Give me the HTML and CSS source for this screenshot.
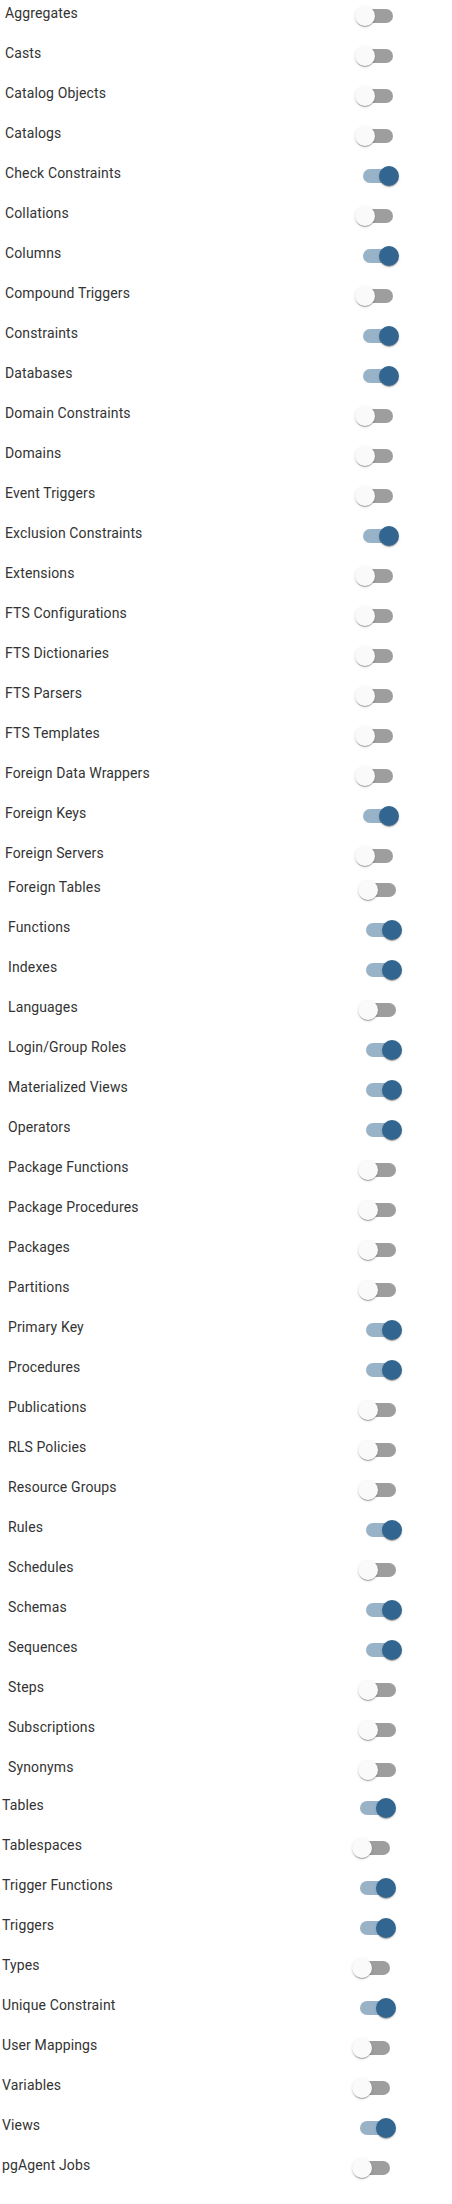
FILE: index.html
```html
<!DOCTYPE html>
<html lang="en">
<head>
<meta charset="utf-8">
<title>Object types</title>
<link rel="stylesheet" href="styles.css">
</head>
<body>
<div class="section s1">
  <div class="row"><span class="label">Aggregates</span><span class="switch"><span class="track"></span><span class="thumb"></span></span></div>
  <div class="row"><span class="label">Casts</span><span class="switch"><span class="track"></span><span class="thumb"></span></span></div>
  <div class="row"><span class="label">Catalog Objects</span><span class="switch"><span class="track"></span><span class="thumb"></span></span></div>
  <div class="row"><span class="label">Catalogs</span><span class="switch"><span class="track"></span><span class="thumb"></span></span></div>
  <div class="row"><span class="label">Check Constraints</span><span class="switch on"><span class="track"></span><span class="thumb"></span></span></div>
  <div class="row"><span class="label">Collations</span><span class="switch"><span class="track"></span><span class="thumb"></span></span></div>
  <div class="row"><span class="label">Columns</span><span class="switch on"><span class="track"></span><span class="thumb"></span></span></div>
  <div class="row"><span class="label">Compound Triggers</span><span class="switch"><span class="track"></span><span class="thumb"></span></span></div>
  <div class="row"><span class="label">Constraints</span><span class="switch on"><span class="track"></span><span class="thumb"></span></span></div>
  <div class="row"><span class="label">Databases</span><span class="switch on"><span class="track"></span><span class="thumb"></span></span></div>
  <div class="row"><span class="label">Domain Constraints</span><span class="switch"><span class="track"></span><span class="thumb"></span></span></div>
  <div class="row"><span class="label">Domains</span><span class="switch"><span class="track"></span><span class="thumb"></span></span></div>
  <div class="row"><span class="label">Event Triggers</span><span class="switch"><span class="track"></span><span class="thumb"></span></span></div>
  <div class="row"><span class="label">Exclusion Constraints</span><span class="switch on"><span class="track"></span><span class="thumb"></span></span></div>
  <div class="row"><span class="label">Extensions</span><span class="switch"><span class="track"></span><span class="thumb"></span></span></div>
  <div class="row"><span class="label">FTS Configurations</span><span class="switch"><span class="track"></span><span class="thumb"></span></span></div>
  <div class="row"><span class="label">FTS Dictionaries</span><span class="switch"><span class="track"></span><span class="thumb"></span></span></div>
  <div class="row"><span class="label">FTS Parsers</span><span class="switch"><span class="track"></span><span class="thumb"></span></span></div>
  <div class="row"><span class="label">FTS Templates</span><span class="switch"><span class="track"></span><span class="thumb"></span></span></div>
  <div class="row"><span class="label">Foreign Data Wrappers</span><span class="switch"><span class="track"></span><span class="thumb"></span></span></div>
  <div class="row"><span class="label">Foreign Keys</span><span class="switch on"><span class="track"></span><span class="thumb"></span></span></div>
  <div class="row"><span class="label">Foreign Servers</span><span class="switch"><span class="track"></span><span class="thumb"></span></span></div>
</div>
<div class="section s2">
  <div class="row"><span class="label">Foreign Tables</span><span class="switch"><span class="track"></span><span class="thumb"></span></span></div>
  <div class="row"><span class="label">Functions</span><span class="switch on"><span class="track"></span><span class="thumb"></span></span></div>
  <div class="row"><span class="label">Indexes</span><span class="switch on"><span class="track"></span><span class="thumb"></span></span></div>
  <div class="row"><span class="label">Languages</span><span class="switch"><span class="track"></span><span class="thumb"></span></span></div>
  <div class="row"><span class="label">Login/Group Roles</span><span class="switch on"><span class="track"></span><span class="thumb"></span></span></div>
  <div class="row"><span class="label">Materialized Views</span><span class="switch on"><span class="track"></span><span class="thumb"></span></span></div>
  <div class="row"><span class="label">Operators</span><span class="switch on"><span class="track"></span><span class="thumb"></span></span></div>
  <div class="row"><span class="label">Package Functions</span><span class="switch"><span class="track"></span><span class="thumb"></span></span></div>
  <div class="row"><span class="label">Package Procedures</span><span class="switch"><span class="track"></span><span class="thumb"></span></span></div>
  <div class="row"><span class="label">Packages</span><span class="switch"><span class="track"></span><span class="thumb"></span></span></div>
  <div class="row"><span class="label">Partitions</span><span class="switch"><span class="track"></span><span class="thumb"></span></span></div>
  <div class="row"><span class="label">Primary Key</span><span class="switch on"><span class="track"></span><span class="thumb"></span></span></div>
  <div class="row"><span class="label">Procedures</span><span class="switch on"><span class="track"></span><span class="thumb"></span></span></div>
  <div class="row"><span class="label">Publications</span><span class="switch"><span class="track"></span><span class="thumb"></span></span></div>
  <div class="row"><span class="label">RLS Policies</span><span class="switch"><span class="track"></span><span class="thumb"></span></span></div>
  <div class="row"><span class="label">Resource Groups</span><span class="switch"><span class="track"></span><span class="thumb"></span></span></div>
  <div class="row"><span class="label">Rules</span><span class="switch on"><span class="track"></span><span class="thumb"></span></span></div>
  <div class="row"><span class="label">Schedules</span><span class="switch"><span class="track"></span><span class="thumb"></span></span></div>
  <div class="row"><span class="label">Schemas</span><span class="switch on"><span class="track"></span><span class="thumb"></span></span></div>
  <div class="row"><span class="label">Sequences</span><span class="switch on"><span class="track"></span><span class="thumb"></span></span></div>
  <div class="row"><span class="label">Steps</span><span class="switch"><span class="track"></span><span class="thumb"></span></span></div>
  <div class="row"><span class="label">Subscriptions</span><span class="switch"><span class="track"></span><span class="thumb"></span></span></div>
  <div class="row"><span class="label">Synonyms</span><span class="switch"><span class="track"></span><span class="thumb"></span></span></div>
</div>
<div class="section s3">
  <div class="row"><span class="label">Tables</span><span class="switch on"><span class="track"></span><span class="thumb"></span></span></div>
  <div class="row"><span class="label">Tablespaces</span><span class="switch"><span class="track"></span><span class="thumb"></span></span></div>
  <div class="row"><span class="label">Trigger Functions</span><span class="switch on"><span class="track"></span><span class="thumb"></span></span></div>
  <div class="row"><span class="label">Triggers</span><span class="switch on"><span class="track"></span><span class="thumb"></span></span></div>
  <div class="row"><span class="label">Types</span><span class="switch"><span class="track"></span><span class="thumb"></span></span></div>
  <div class="row"><span class="label">Unique Constraint</span><span class="switch on"><span class="track"></span><span class="thumb"></span></span></div>
  <div class="row"><span class="label">User Mappings</span><span class="switch"><span class="track"></span><span class="thumb"></span></span></div>
  <div class="row"><span class="label">Variables</span><span class="switch"><span class="track"></span><span class="thumb"></span></span></div>
  <div class="row"><span class="label">Views</span><span class="switch on"><span class="track"></span><span class="thumb"></span></span></div>
  <div class="row"><span class="label">pgAgent Jobs</span><span class="switch"><span class="track"></span><span class="thumb"></span></span></div>
</div>
</body>
</html>
```
FILE: styles.css
```css
html, body {
  margin: 0;
  padding: 0;
  background: #ffffff;
}
body {
  font-family: Roboto, "Liberation Sans", sans-serif;
  font-size: 14px;
  letter-spacing: 0.00938em;
  color: #333333;
}
.section {
  display: flex;
  flex-direction: column;
}
.s1 { padding-left: 5px; }
.s2 { padding-left: 8px; margin-top: -6px; }
.s3 { padding-left: 2px; margin-top: -2px; }
.row {
  display: flex;
  align-items: flex-start;
  height: 40px;
}
.label {
  width: 350px;
  flex: none;
  line-height: 20px;
  padding-top: 3px;
  white-space: nowrap;
}
.switch {
  position: relative;
  flex: none;
  width: 42px;
  height: 20px;
  margin-top: 6px;
}
.switch.on {
  margin-left: 4px;
}
.track {
  position: absolute;
  left: 4px;
  top: 3px;
  width: 34px;
  height: 14px;
  border-radius: 7px;
  background: #9e9e9e;
}
.thumb {
  position: absolute;
  left: 0;
  top: 0;
  width: 20px;
  height: 20px;
  border-radius: 50%;
  background: #fafafa;
  box-shadow: 0 2px 1px -1px rgba(0,0,0,0.2), 0 1px 1px 0 rgba(0,0,0,0.14), 0 1px 3px 0 rgba(0,0,0,0.12);
}
.switch.on .track {
  background: #98b3c8;
}
.switch.on .thumb {
  left: 20px;
  background: #326690;
}
```
